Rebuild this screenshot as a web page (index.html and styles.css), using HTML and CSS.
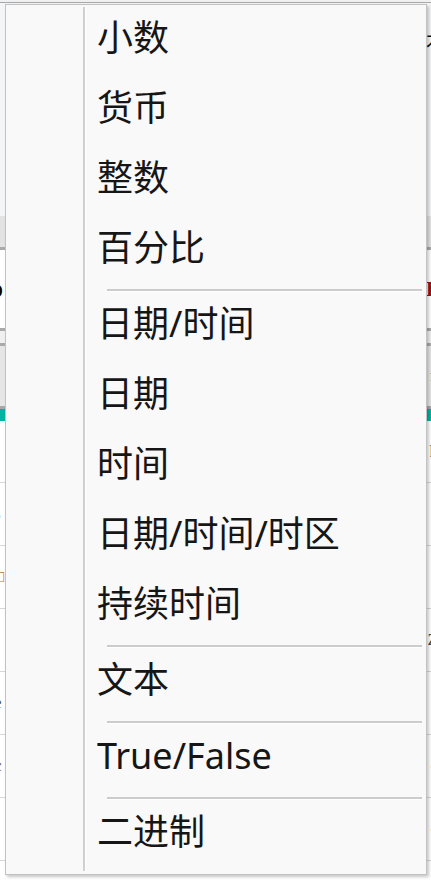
FILE: index.html
```html
<!DOCTYPE html>
<html lang="zh-CN">
<head>
<meta charset="utf-8">
<title>格式菜单</title>
<link rel="stylesheet" href="styles.css">
</head>
<body>
<div class="bg">
  <div class="top"></div>
  <div class="panel"><span class="edge-r glyph-top">木</span></div>
  <div class="tabs"></div>
  <div class="field"><span class="edge-l big">p</span><span class="edge-r red">I</span></div>
  <div class="gap"></div>
  <div class="header"><span class="edge-r dark">r</span></div>
  <div class="accent"></div>
  <div class="row first"><span class="edge-l"></span><span class="edge-r">h</span></div>
  <div class="row"><span class="edge-l">s</span><span class="edge-r">s</span></div>
  <div class="row"><span class="edge-l orange">□</span><span class="edge-r">s</span></div>
  <div class="row"><span class="edge-l navy">]</span><span class="edge-r">Z</span></div>
  <div class="row"><span class="edge-l">e</span><span class="edge-r">s</span></div>
  <div class="row"><span class="edge-l">c</span><span class="edge-r">c</span></div>
  <div class="row"><span class="edge-l">t</span><span class="edge-r">c</span></div>
</div>

<div class="menu">
  <div class="gutter"></div>
  <ul class="items">
    <li class="item">小数</li>
    <li class="item">货币</li>
    <li class="item">整数</li>
    <li class="item">百分比</li>
    <li class="sep"></li>
    <li class="item">日期/时间</li>
    <li class="item">日期</li>
    <li class="item">时间</li>
    <li class="item">日期/时间/时区</li>
    <li class="item">持续时间</li>
    <li class="sep"></li>
    <li class="item">文本</li>
    <li class="sep"></li>
    <li class="item">True/False</li>
    <li class="sep"></li>
    <li class="item">二进制</li>
  </ul>
</div>
</body>
</html>
```

FILE: styles.css
```css
html, body {
  margin: 0;
  padding: 0;
}
body {
  width: 431px;
  height: 881px;
  overflow: hidden;
  position: relative;
  background: #ffffff;
  font-family: "Liberation Serif", serif;
}

/* background page fragments */
.bg {
  display: flex;
  flex-direction: column;
}
.bg > div {
  display: flex;
  justify-content: space-between;
  align-items: center;
  overflow: hidden;
}
.top {
  height: 2px;
  background: #f0f0f0;
  border-bottom: 1px solid #a8a8a8;
}
.panel {
  height: 213px;
  background: #f4f5f7;
  align-items: flex-start !important;
}
.tabs {
  height: 31px;
  background: #e3e3e3;
  border-bottom: 3px solid #aaaaaa;
}
.field {
  height: 78px;
  background: #ffffff;
  border-bottom: 3px solid #aaaaaa;
}
.gap {
  height: 12px;
  background: #f0f0f0;
  border-bottom: 3px solid #aaaaaa;
}
.header {
  height: 60px;
  background: #e6e6e6;
  border-bottom: 3px solid #a8a8a8;
}
.accent {
  height: 12px;
  background: #00b2a2;
}
.row {
  height: 62px;
  border-bottom: 1px solid #d6d6d6;
}
.row.first {
  height: 61px;
}
.edge-l {
  font-size: 17px;
  color: #444;
  margin-left: -6px;
}
.edge-r {
  font-size: 17px;
  color: #444;
  margin-right: -7px;
  margin-left: auto;
}
.glyph-top {
  margin-top: 22px;
  font-family: "Noto Sans CJK SC", sans-serif;
  font-size: 20px;
  color: #111;
  margin-right: -15px;
}
.big {
  font-size: 26px;
  color: #000;
  margin-left: -10px;
}
.red {
  color: #9b1020;
  font-size: 22px;
  font-weight: bold;
  margin-right: -3px;
}
.dark {
  color: #333;
  margin-right: -5px;
}
.orange { color: #c07030; }
.navy { color: #22336a; }

/* context menu */
.menu {
  position: absolute;
  left: 5px;
  top: 4px;
  width: 422px;
  height: 871px;
  box-sizing: border-box;
  border: 1px solid #c2c2c2;
  background: #f9f9f9;
  box-shadow: 2px 2px 3px rgba(0, 0, 0, 0.22);
  padding: 2px 0 3px 0;
  display: grid;
  grid-template-columns: 77px 1fr;
  font-family: "Noto Sans", "Noto Sans CJK SC", sans-serif;
  color: #161616;
}
.items {
  list-style: none;
  margin: 0;
  padding: 0 0 0 12px;
  border-left: 2px solid #d0d0d0;
  box-shadow: inset 1px 0 0 #ffffff;
}
.item {
  height: 70px;
  box-sizing: border-box;
  padding-bottom: 9px;
  display: flex;
  align-items: center;
  font-size: 36px;
  line-height: 1;
  white-space: nowrap;
}
.sep {
  height: 0;
  margin: 2px 4px 1px 10px;
  border-top: 2px solid #cccccc;
  border-bottom: 1px solid #ffffff;
}
```
